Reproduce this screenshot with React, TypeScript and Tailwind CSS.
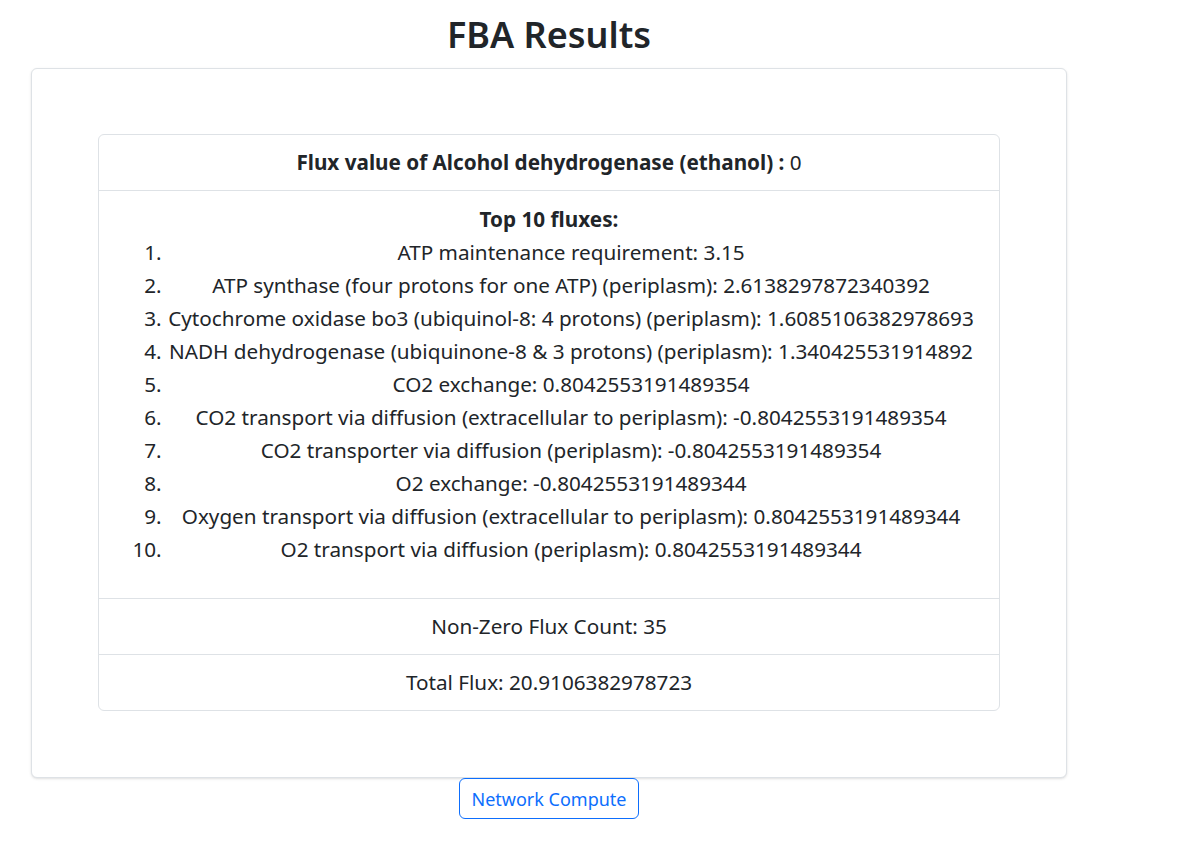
const fluxes = [
  'ATP maintenance requirement: 3.15',
  'ATP synthase (four protons for one ATP) (periplasm): 2.6138297872340392',
  'Cytochrome oxidase bo3 (ubiquinol-8: 4 protons) (periplasm): 1.6085106382978693',
  'NADH dehydrogenase (ubiquinone-8 & 3 protons) (periplasm): 1.340425531914892',
  'CO2 exchange: 0.8042553191489354',
  'CO2 transport via diffusion (extracellular to periplasm): -0.8042553191489354',
  'CO2 transporter via diffusion (periplasm): -0.8042553191489354',
  'O2 exchange: -0.8042553191489344',
  'Oxygen transport via diffusion (extracellular to periplasm): 0.8042553191489344',
  'O2 transport via diffusion (periplasm): 0.8042553191489344',
];

export default function App() {
  return (
    <div className="min-h-screen bg-white text-[#212529] font-['Noto_Sans','Liberation_Sans',sans-serif]">
      <div className="ml-[31px] w-[1036px] pt-[11px] flex flex-col items-center">
        <h1 className="text-[36px] font-semibold leading-[48px] mb-[9px]">FBA Results</h1>

        {/* results card */}
        <div className="w-full bg-white border border-[#dee2e6] rounded-md shadow-sm px-[66px] pt-[65px] pb-[66px]">
          <ul className="border border-[#dee2e6] rounded-md text-[20.7px]">
            <li className="py-3 px-4 text-center leading-[31px] border-b border-[#dee2e6]">
              <span className="font-bold">Flux value of Alcohol dehydrogenase (ethanol) :</span> 0
            </li>
            <li className="pt-3 pb-[32px] px-4 border-b border-[#dee2e6]">
              <div className="text-center font-bold leading-[33px]">Top 10 fluxes:</div>
              <ol className="list-decimal pl-[52px] pr-[8px] leading-[33px] text-center">
                {fluxes.map((f) => (
                  <li key={f} className="whitespace-nowrap">
                    {f}
                  </li>
                ))}
              </ol>
            </li>
            <li className="py-3 px-4 text-center leading-[31px] border-b border-[#dee2e6]">
              Non-Zero Flux Count: 35
            </li>
            <li className="py-3 px-4 text-center leading-[31px]">Total Flux: 20.9106382978723</li>
          </ul>
        </div>

        <button className="px-[11px] pt-[7px] pb-[5px] text-[18px] leading-[27px] text-[#0d6efd] border border-[#0d6efd] rounded-md bg-white">
          Network Compute
        </button>
      </div>
    </div>
  );
}
